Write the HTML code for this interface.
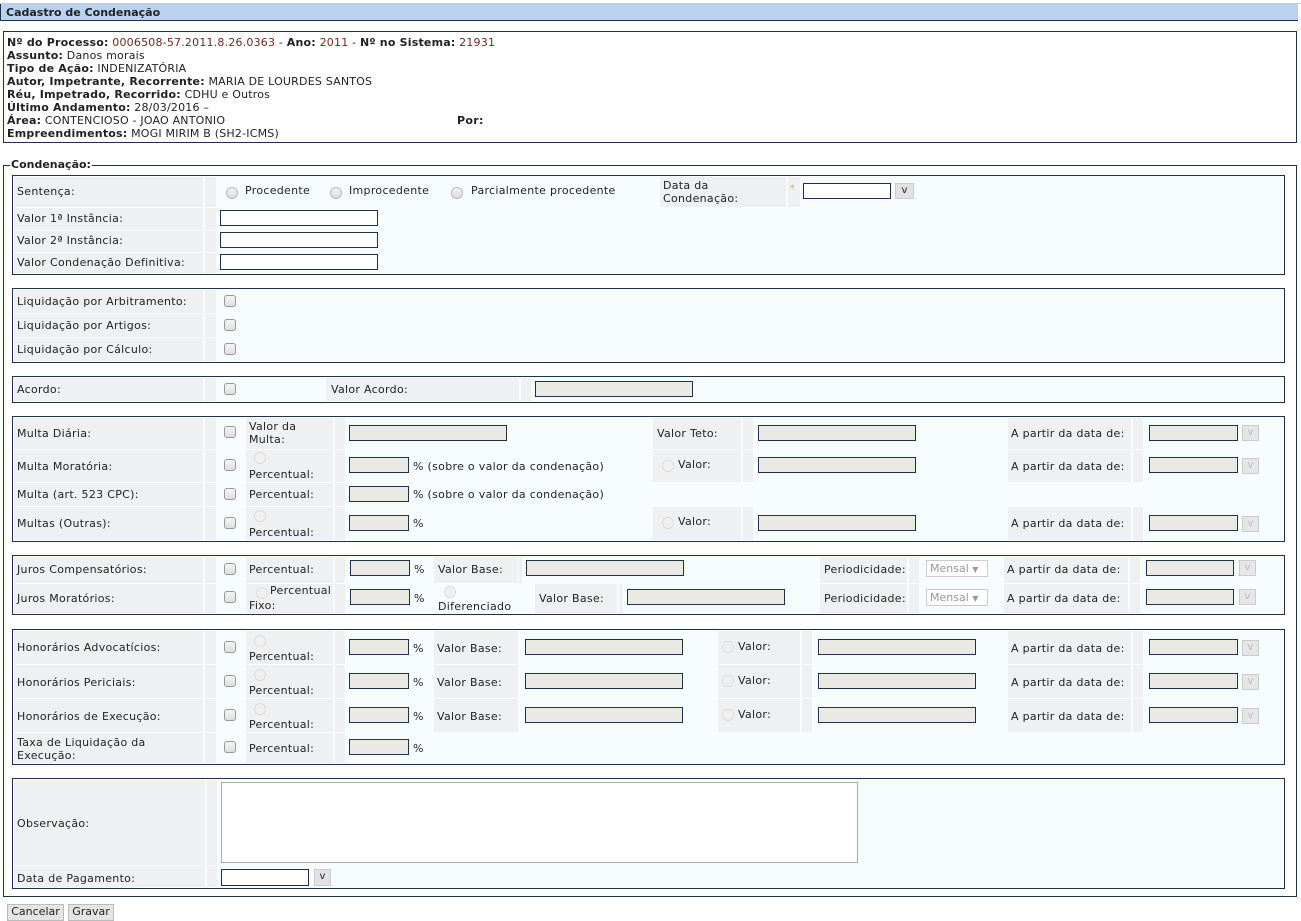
<!DOCTYPE html>
<html><head><meta charset="utf-8">
<style>
body{margin:0;width:1301px;height:921px;background:#fff;position:relative;overflow:hidden;font-family:"DejaVu Sans",Verdana,"Liberation Sans",sans-serif;font-size:11px;color:#222}
div{position:absolute;box-sizing:border-box}
.t{white-space:nowrap;line-height:13px;letter-spacing:0.3px}
.b{font-weight:bold}
.v{color:#6a2a20}
.p{border:1px solid #1e3347;background:#f7fdff;left:12px;width:1273px}
.c{background:#eff0f2}
.i{background:#fff;border:1px solid #1e3347;height:16px}
.d{background:#ebe9e4;border:1px solid #1e3347;height:16px}
.r{width:12px;height:12px;border-radius:50%;border:1px solid #b8b8b8;background:linear-gradient(#f4f4f4,#dcdcdc)}
.rd{width:12px;height:12px;border-radius:50%;border:1px solid #ddd;background:#f0f0f0}
.k{width:12px;height:12px;border-radius:3px;border:1px solid #999;background:linear-gradient(#f6f6f6,#dedede)}
.bt{width:17px;height:16px;background:#e6e6e6;border:1px solid #ccc;color:#bbb;font-size:10px;text-align:center;line-height:14px}
.bn{background:#e4e4e4;border:1px solid #bbb;color:#222;text-align:center;line-height:14px;font-size:11px}
</style></head><body>
<div style="left:0;top:3px;width:1301px;height:1px;background:#ccc"></div>
<div style="left:0;top:4px;width:1298px;height:17px;background:#bad2ef;border-bottom:1px solid #1e3347;border-left:1px solid #1e3347"></div>
<div class="t b" style="left:6px;top:6px;letter-spacing:0">Cadastro de Condenação</div>

<div style="left:3px;top:31px;width:1294px;height:112px;border:1px solid #1e3347"></div>
<div class="t" style="left:7px;top:36px;letter-spacing:0.2px"><b>Nº do Processo:</b> <span class="v">0006508-57.2011.8.26.0363</span> - <b>Ano:</b> <span class="v">2011</span> - <b>Nº no Sistema:</b> <span class="v">21931</span></div>
<div class="t" style="left:7px;top:49px;letter-spacing:0.2px"><b>Assunto:</b> Danos morais</div>
<div class="t" style="left:7px;top:62px;letter-spacing:0.2px"><b>Tipo de Ação:</b> INDENIZATÓRIA</div>
<div class="t" style="left:7px;top:75px;letter-spacing:0.2px"><b>Autor, Impetrante, Recorrente:</b> MARIA DE LOURDES SANTOS</div>
<div class="t" style="left:7px;top:88px;letter-spacing:0.2px"><b>Réu, Impetrado, Recorrido:</b> CDHU e Outros</div>
<div class="t" style="left:7px;top:101px;letter-spacing:0.2px"><b>Último Andamento:</b> 28/03/2016 –</div>
<div class="t" style="left:7px;top:114px;letter-spacing:0.2px"><b>Área:</b> CONTENCIOSO - JOAO ANTONIO</div>
<div class="t b" style="left:457px;top:114px">Por:</div>
<div class="t" style="left:7px;top:127px;letter-spacing:0.2px"><b>Empreendimentos:</b> MOGI MIRIM B (SH2-ICMS)</div>

<div style="left:3px;top:165px;width:1294px;height:732px;border:1px solid #1e3347"></div>
<div class="t b" style="left:10px;top:158px;background:#fff;padding:0 1px;letter-spacing:0">Condenação:</div>

<!-- Panel 1 -->
<div class="p" style="top:175px;height:100px"></div>
<div class="c" style="left:14px;top:177px;width:189px;height:30px"></div>
<div class="c" style="left:205px;top:177px;width:11px;height:30px"></div>
<div class="t" style="left:17px;top:185px">Sentença:</div>
<div class="r" style="left:226px;top:187px"></div><div class="t" style="left:245px;top:184px">Procedente</div>
<div class="r" style="left:330px;top:187px"></div><div class="t" style="left:349px;top:184px">Improcedente</div>
<div class="r" style="left:451px;top:187px"></div><div class="t" style="left:471px;top:184px">Parcialmente procedente</div>
<div class="c" style="left:660px;top:177px;width:126px;height:30px"></div>
<div class="c" style="left:788px;top:177px;width:12px;height:30px"></div>
<div class="t" style="left:663px;top:179px">Data da<br>Condenação:</div>
<div class="t" style="left:790px;top:183px;color:#d9a050;font-size:9px">*</div>
<div class="i" style="left:803px;top:183px;width:88px"></div>
<div class="bt" style="left:895px;top:183px;width:19px;color:#222;background:#e2e2e2">v</div>
<div class="c" style="left:14px;top:208px;width:189px;height:22px"></div><div class="c" style="left:205px;top:208px;width:11px;height:22px"></div>
<div class="t" style="left:17px;top:212px">Valor 1ª Instância:</div><div class="i" style="left:220px;top:210px;width:158px"></div>
<div class="c" style="left:14px;top:231px;width:189px;height:21px"></div><div class="c" style="left:205px;top:231px;width:11px;height:21px"></div>
<div class="t" style="left:17px;top:234px">Valor 2ª Instância:</div><div class="i" style="left:220px;top:232px;width:158px"></div>
<div class="c" style="left:14px;top:253px;width:189px;height:20px"></div><div class="c" style="left:205px;top:253px;width:11px;height:20px"></div>
<div class="t" style="left:17px;top:256px">Valor Condenação Definitiva:</div><div class="i" style="left:220px;top:254px;width:158px"></div>

<!-- Panel 2 -->
<div class="p" style="top:288px;height:75px"></div>
<div class="c" style="left:14px;top:290px;width:189px;height:23px"></div><div class="c" style="left:205px;top:290px;width:11px;height:23px"></div>
<div class="t" style="left:17px;top:295px">Liquidação por Arbitramento:</div><div class="k" style="left:224px;top:295px"></div>
<div class="c" style="left:14px;top:314px;width:189px;height:23px"></div><div class="c" style="left:205px;top:314px;width:11px;height:23px"></div>
<div class="t" style="left:17px;top:319px">Liquidação por Artigos:</div><div class="k" style="left:224px;top:319px"></div>
<div class="c" style="left:14px;top:338px;width:189px;height:23px"></div><div class="c" style="left:205px;top:338px;width:11px;height:23px"></div>
<div class="t" style="left:17px;top:343px">Liquidação por Cálculo:</div><div class="k" style="left:224px;top:343px"></div>

<!-- Panel 3 -->
<div class="p" style="top:376px;height:27px"></div>
<div class="c" style="left:14px;top:378px;width:189px;height:23px"></div><div class="c" style="left:205px;top:378px;width:11px;height:23px"></div>
<div class="t" style="left:17px;top:383px">Acordo:</div><div class="k" style="left:224px;top:383px"></div>
<div class="c" style="left:326px;top:378px;width:193px;height:23px"></div><div class="c" style="left:521px;top:378px;width:10px;height:23px"></div>
<div class="t" style="left:331px;top:383px">Valor Acordo:</div><div class="d" style="left:535px;top:381px;width:158px"></div>

<!-- Panel 4 -->
<div class="p" style="top:416px;height:126px"></div>
<div class="c" style="left:14px;top:418px;width:189px;height:31px"></div><div class="c" style="left:205px;top:418px;width:11px;height:31px"></div>
<div class="c" style="left:246px;top:418px;width:87px;height:31px"></div><div class="c" style="left:335px;top:418px;width:10px;height:31px"></div>
<div class="t" style="left:17px;top:427px">Multa Diária:</div><div class="k" style="left:224px;top:426px"></div>
<div class="t" style="left:249px;top:420px">Valor da<br>Multa:</div>
<div class="d" style="left:349px;top:425px;width:158px"></div>
<div class="c" style="left:653px;top:418px;width:88px;height:31px"></div><div class="c" style="left:743px;top:418px;width:10px;height:31px"></div>
<div class="t" style="left:657px;top:427px">Valor Teto:</div><div class="d" style="left:758px;top:425px;width:158px"></div>
<div class="c" style="left:1008px;top:418px;width:123px;height:31px"></div><div class="c" style="left:1133px;top:418px;width:10px;height:31px"></div>
<div class="t" style="left:1011px;top:427px">A partir da data de:</div><div class="d" style="left:1149px;top:425px;width:89px"></div><div class="bt" style="left:1242px;top:425px">v</div>
<div class="c" style="left:14px;top:450px;width:189px;height:32px"></div><div class="c" style="left:205px;top:450px;width:11px;height:32px"></div>
<div class="c" style="left:246px;top:450px;width:87px;height:32px"></div><div class="c" style="left:335px;top:450px;width:10px;height:32px"></div>
<div class="t" style="left:17px;top:460px">Multa Moratória:</div><div class="k" style="left:224px;top:459px"></div>
<div class="rd" style="left:254px;top:452px"></div><div class="t" style="left:249px;top:468px">Percentual:</div>
<div class="d" style="left:349px;top:457px;width:60px"></div><div class="t" style="left:413px;top:460px">% (sobre o valor da condenação)</div>
<div class="c" style="left:653px;top:450px;width:88px;height:32px"></div><div class="c" style="left:743px;top:450px;width:10px;height:32px"></div>
<div class="rd" style="left:662px;top:460px"></div><div class="t" style="left:678px;top:458px">Valor:</div><div class="d" style="left:758px;top:457px;width:158px"></div>
<div class="c" style="left:1008px;top:450px;width:123px;height:32px"></div><div class="c" style="left:1133px;top:450px;width:10px;height:32px"></div>
<div class="t" style="left:1011px;top:460px">A partir da data de:</div><div class="d" style="left:1149px;top:457px;width:89px"></div><div class="bt" style="left:1242px;top:458px">v</div>
<div class="c" style="left:14px;top:483px;width:189px;height:23px"></div><div class="c" style="left:205px;top:483px;width:11px;height:23px"></div>
<div class="c" style="left:246px;top:483px;width:87px;height:23px"></div><div class="c" style="left:335px;top:483px;width:10px;height:23px"></div>
<div class="t" style="left:17px;top:488px">Multa (art. 523 CPC):</div><div class="k" style="left:224px;top:488px"></div>
<div class="t" style="left:249px;top:488px">Percentual:</div>
<div class="d" style="left:349px;top:486px;width:60px"></div><div class="t" style="left:413px;top:488px">% (sobre o valor da condenação)</div>
<div class="c" style="left:14px;top:507px;width:189px;height:33px"></div><div class="c" style="left:205px;top:507px;width:11px;height:33px"></div>
<div class="c" style="left:246px;top:507px;width:87px;height:33px"></div><div class="c" style="left:335px;top:507px;width:10px;height:33px"></div>
<div class="t" style="left:17px;top:517px">Multas (Outras):</div><div class="k" style="left:224px;top:517px"></div>
<div class="rd" style="left:254px;top:510px"></div><div class="t" style="left:249px;top:526px">Percentual:</div>
<div class="d" style="left:349px;top:515px;width:60px"></div><div class="t" style="left:413px;top:517px">%</div>
<div class="c" style="left:653px;top:507px;width:88px;height:33px"></div><div class="c" style="left:743px;top:507px;width:10px;height:33px"></div>
<div class="rd" style="left:662px;top:517px"></div><div class="t" style="left:678px;top:515px">Valor:</div><div class="d" style="left:758px;top:515px;width:158px"></div>
<div class="c" style="left:1008px;top:507px;width:123px;height:33px"></div><div class="c" style="left:1133px;top:507px;width:10px;height:33px"></div>
<div class="t" style="left:1011px;top:517px">A partir da data de:</div><div class="d" style="left:1149px;top:515px;width:89px"></div><div class="bt" style="left:1242px;top:516px">v</div>

<!-- Panel 5 -->
<div class="p" style="top:555px;height:60px"></div>
<div class="c" style="left:14px;top:557px;width:189px;height:26px"></div><div class="c" style="left:205px;top:557px;width:11px;height:26px"></div>
<div class="c" style="left:246px;top:557px;width:87px;height:26px"></div><div class="c" style="left:335px;top:557px;width:10px;height:26px"></div>
<div class="t" style="left:17px;top:563px">Juros Compensatórios:</div><div class="k" style="left:224px;top:563px"></div>
<div class="t" style="left:249px;top:563px">Percentual:</div><div class="d" style="left:350px;top:560px;width:60px"></div><div class="t" style="left:414px;top:563px">%</div>
<div class="c" style="left:434px;top:557px;width:84px;height:26px"></div><div class="c" style="left:519px;top:557px;width:3px;height:26px"></div>
<div class="t" style="left:438px;top:563px">Valor Base:</div><div class="d" style="left:526px;top:560px;width:158px"></div>
<div class="c" style="left:820px;top:557px;width:87px;height:26px"></div><div class="c" style="left:909px;top:557px;width:10px;height:26px"></div>
<div class="t" style="left:824px;top:563px">Periodicidade:</div>
<div style="left:926px;top:560px;width:62px;height:17px;border:1px solid #ccc;background:#fff;color:#999;line-height:15px;padding-left:3px">Mensal <span style="font-size:8px">▼</span></div>
<div class="c" style="left:1004px;top:557px;width:124px;height:26px"></div><div class="c" style="left:1130px;top:557px;width:10px;height:26px"></div>
<div class="t" style="left:1007px;top:563px">A partir da data de:</div><div class="d" style="left:1146px;top:560px;width:88px"></div><div class="bt" style="left:1239px;top:560px">v</div>
<div class="c" style="left:14px;top:584px;width:189px;height:29px"></div><div class="c" style="left:205px;top:584px;width:11px;height:29px"></div>
<div class="c" style="left:246px;top:584px;width:87px;height:29px"></div><div class="c" style="left:335px;top:584px;width:10px;height:29px"></div>
<div class="t" style="left:17px;top:592px">Juros Moratórios:</div><div class="k" style="left:224px;top:591px"></div>
<div class="rd" style="left:256px;top:587px"></div><div class="t" style="left:270px;top:584px">Percentual</div><div class="t" style="left:249px;top:599px">Fixo:</div>
<div class="d" style="left:350px;top:589px;width:60px"></div><div class="t" style="left:414px;top:592px">%</div>
<div class="rd" style="left:444px;top:586px"></div><div class="t" style="left:438px;top:600px">Diferenciado</div>
<div class="c" style="left:535px;top:584px;width:82px;height:29px"></div><div class="c" style="left:619px;top:584px;width:4px;height:29px"></div>
<div class="t" style="left:539px;top:592px">Valor Base:</div><div class="d" style="left:627px;top:589px;width:158px"></div>
<div class="c" style="left:820px;top:584px;width:87px;height:29px"></div><div class="c" style="left:909px;top:584px;width:10px;height:29px"></div>
<div class="t" style="left:824px;top:592px">Periodicidade:</div>
<div style="left:926px;top:589px;width:62px;height:17px;border:1px solid #ccc;background:#fff;color:#999;line-height:15px;padding-left:3px">Mensal <span style="font-size:8px">▼</span></div>
<div class="c" style="left:1004px;top:584px;width:124px;height:29px"></div><div class="c" style="left:1130px;top:584px;width:10px;height:29px"></div>
<div class="t" style="left:1007px;top:592px">A partir da data de:</div><div class="d" style="left:1146px;top:589px;width:88px"></div><div class="bt" style="left:1239px;top:589px">v</div>

<!-- Panel 6 -->
<div class="p" style="top:629px;height:136px"></div>
<div class="c" style="left:14px;top:631px;width:189px;height:33px"></div><div class="c" style="left:205px;top:631px;width:11px;height:33px"></div>
<div class="c" style="left:246px;top:631px;width:87px;height:33px"></div><div class="c" style="left:335px;top:631px;width:10px;height:33px"></div>
<div class="t" style="left:17px;top:641px">Honorários Advocatícios:</div><div class="k" style="left:224px;top:641px"></div>
<div class="rd" style="left:254px;top:635px"></div><div class="t" style="left:249px;top:650px">Percentual:</div>
<div class="d" style="left:349px;top:639px;width:60px"></div><div class="t" style="left:413px;top:642px">%</div>
<div class="c" style="left:434px;top:631px;width:84px;height:33px"></div><div class="t" style="left:437px;top:642px">Valor Base:</div><div class="d" style="left:525px;top:639px;width:158px"></div>
<div class="c" style="left:718px;top:631px;width:82px;height:33px"></div><div class="c" style="left:802px;top:631px;width:10px;height:33px"></div>
<div class="rd" style="left:722px;top:641px"></div><div class="t" style="left:738px;top:640px">Valor:</div><div class="d" style="left:818px;top:639px;width:158px"></div>
<div class="c" style="left:1008px;top:631px;width:123px;height:33px"></div><div class="c" style="left:1133px;top:631px;width:10px;height:33px"></div>
<div class="t" style="left:1011px;top:642px">A partir da data de:</div><div class="d" style="left:1149px;top:639px;width:89px"></div><div class="bt" style="left:1242px;top:640px">v</div>

<div class="c" style="left:14px;top:665px;width:189px;height:33px"></div><div class="c" style="left:205px;top:665px;width:11px;height:33px"></div>
<div class="c" style="left:246px;top:665px;width:87px;height:33px"></div><div class="c" style="left:335px;top:665px;width:10px;height:33px"></div>
<div class="t" style="left:17px;top:676px">Honorários Periciais:</div><div class="k" style="left:224px;top:675px"></div>
<div class="rd" style="left:254px;top:669px"></div><div class="t" style="left:249px;top:684px">Percentual:</div>
<div class="d" style="left:349px;top:673px;width:60px"></div><div class="t" style="left:413px;top:676px">%</div>
<div class="c" style="left:434px;top:665px;width:84px;height:33px"></div><div class="t" style="left:437px;top:676px">Valor Base:</div><div class="d" style="left:525px;top:673px;width:158px"></div>
<div class="c" style="left:718px;top:665px;width:82px;height:33px"></div><div class="c" style="left:802px;top:665px;width:10px;height:33px"></div>
<div class="rd" style="left:722px;top:675px"></div><div class="t" style="left:738px;top:674px">Valor:</div><div class="d" style="left:818px;top:673px;width:158px"></div>
<div class="c" style="left:1008px;top:665px;width:123px;height:33px"></div><div class="c" style="left:1133px;top:665px;width:10px;height:33px"></div>
<div class="t" style="left:1011px;top:676px">A partir da data de:</div><div class="d" style="left:1149px;top:673px;width:89px"></div><div class="bt" style="left:1242px;top:674px">v</div>

<div class="c" style="left:14px;top:699px;width:189px;height:33px"></div><div class="c" style="left:205px;top:699px;width:11px;height:33px"></div>
<div class="c" style="left:246px;top:699px;width:87px;height:33px"></div><div class="c" style="left:335px;top:699px;width:10px;height:33px"></div>
<div class="t" style="left:17px;top:710px">Honorários de Execução:</div><div class="k" style="left:224px;top:709px"></div>
<div class="rd" style="left:254px;top:703px"></div><div class="t" style="left:249px;top:718px">Percentual:</div>
<div class="d" style="left:349px;top:707px;width:60px"></div><div class="t" style="left:413px;top:710px">%</div>
<div class="c" style="left:434px;top:699px;width:84px;height:33px"></div><div class="t" style="left:437px;top:710px">Valor Base:</div><div class="d" style="left:525px;top:707px;width:158px"></div>
<div class="c" style="left:718px;top:699px;width:82px;height:33px"></div><div class="c" style="left:802px;top:699px;width:10px;height:33px"></div>
<div class="rd" style="left:722px;top:709px"></div><div class="t" style="left:738px;top:708px">Valor:</div><div class="d" style="left:818px;top:707px;width:158px"></div>
<div class="c" style="left:1008px;top:699px;width:123px;height:33px"></div><div class="c" style="left:1133px;top:699px;width:10px;height:33px"></div>
<div class="t" style="left:1011px;top:710px">A partir da data de:</div><div class="d" style="left:1149px;top:707px;width:89px"></div><div class="bt" style="left:1242px;top:708px">v</div>

<div class="c" style="left:14px;top:733px;width:189px;height:30px"></div><div class="c" style="left:205px;top:733px;width:11px;height:30px"></div>
<div class="c" style="left:246px;top:733px;width:87px;height:30px"></div><div class="c" style="left:335px;top:733px;width:10px;height:30px"></div>
<div class="t" style="left:17px;top:736px">Taxa de Liquidação da<br>Execução:</div><div class="k" style="left:224px;top:741px"></div>
<div class="t" style="left:249px;top:742px">Percentual:</div>
<div class="d" style="left:349px;top:739px;width:60px"></div><div class="t" style="left:413px;top:742px">%</div>

<!-- Panel 7 -->
<div class="p" style="top:778px;height:111px"></div>
<div class="c" style="left:14px;top:780px;width:191px;height:85px"></div><div class="c" style="left:207px;top:780px;width:10px;height:85px"></div>
<div class="t" style="left:17px;top:817px">Observação:</div>
<div style="left:221px;top:782px;width:637px;height:81px;border:1px solid #aaa;background:#fff"></div>
<div class="c" style="left:14px;top:866px;width:191px;height:21px"></div><div class="c" style="left:207px;top:866px;width:10px;height:21px"></div>
<div class="t" style="left:17px;top:872px">Data de Pagamento:</div>
<div class="i" style="left:221px;top:869px;width:88px;height:17px"></div>
<div class="bt" style="left:314px;top:869px;height:17px;color:#222;background:#e2e2e2">v</div>

<div class="bn" style="left:7px;top:904px;width:57px;height:17px">Cancelar</div>
<div class="bn" style="left:68px;top:904px;width:46px;height:17px">Gravar</div>
</body></html>
